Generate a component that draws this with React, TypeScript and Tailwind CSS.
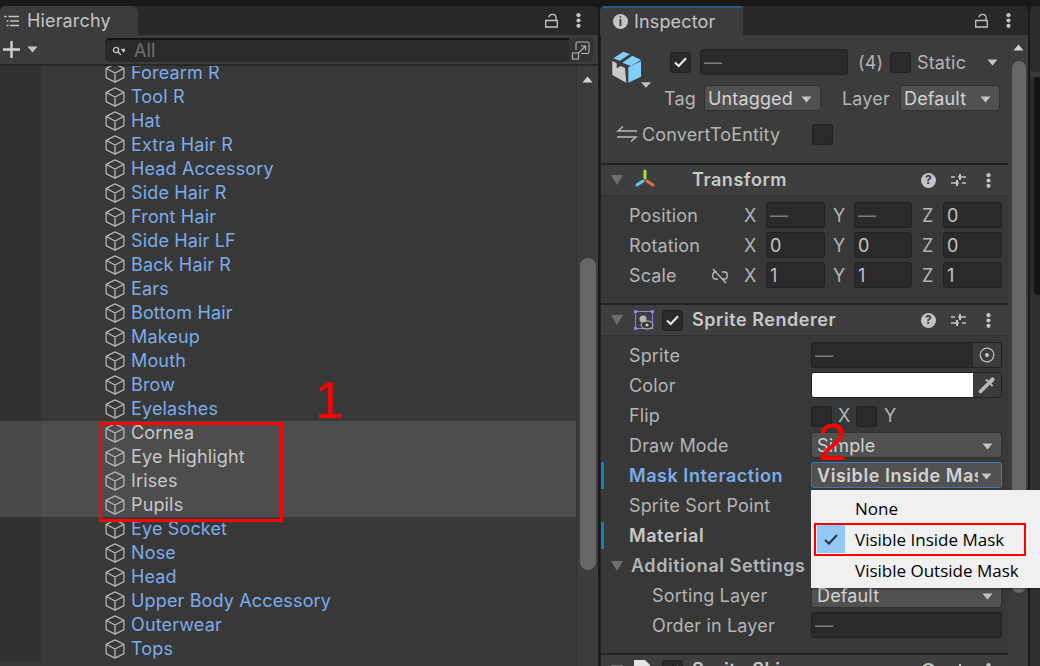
const hierarchyNames = [
  "Forearm R",
  "Tool R",
  "Hat",
  "Extra Hair R",
  "Head Accessory",
  "Side Hair R",
  "Front Hair",
  "Side Hair LF",
  "Back Hair R",
  "Ears",
  "Bottom Hair",
  "Makeup",
  "Mouth",
  "Brow",
  "Eyelashes",
  "Cornea",
  "Eye Highlight",
  "Irises",
  "Pupils",
  "Eye Socket",
  "Nose",
  "Head",
  "Upper Body Accessory",
  "Outerwear",
  "Tops",
];

const selectedNames = ["Cornea", "Eye Highlight", "Irises", "Pupils"];

const CubeIcon = () => (
  <svg width="20" height="20" viewBox="0 0 20 20" fill="none" stroke="#b5b5b5" strokeWidth="1.3" strokeLinejoin="round" className="shrink-0">
    <path d="M10 0.9 18.9 5.4V14.6L10 19.1 1.1 14.6V5.4Z" />
    <path d="M1.1 5.4 10 10 18.9 5.4M10 10V19.1" />
  </svg>
);

const Caret = ({ color = "#c4c4c4" }: { color?: string }) => (
  <svg width="11" height="7" viewBox="0 0 11 7" className="shrink-0">
    <path d="M0.5 0.5H10.5L5.5 6.5Z" fill={color} />
  </svg>
);

const FoldCaret = () => (
  <svg width="12" height="10" viewBox="0 0 12 10" className="shrink-0">
    <path d="M0 0H12L6 10Z" fill="#6f6f6f" />
  </svg>
);

const LockIcon = () => (
  <svg width="13" height="15" viewBox="0 0 13 15" fill="none" stroke="#c4c4c4" strokeWidth="1.3">
    <path d="M0.7 7.5H12.3V14H0.7Z" />
    <path d="M4 4.2C4 1.2 9.5 0 11 3.4V7.5" />
  </svg>
);

const DotsIcon = () => (
  <svg width="5" height="15" viewBox="0 0 5 15" fill="#c4c4c4">
    <circle cx="2.5" cy="2.2" r="2.1" />
    <circle cx="2.5" cy="7.5" r="2.1" />
    <circle cx="2.5" cy="12.8" r="2.1" />
  </svg>
);

const HelpIcon = () => (
  <div className="w-[15px] h-[15px] rounded-full bg-[#c4c4c4] text-[#383838] text-[12px] font-bold flex items-center justify-center leading-none">
    ?
  </div>
);

const PresetIcon = () => (
  <svg width="15" height="15" viewBox="0 0 15 15" stroke="#c4c4c4" strokeWidth="1.3" fill="#c4c4c4">
    <path d="M7 4H15M0 4H4M0 10H8M11 10H15" />
    <rect x="8" y="1" width="2" height="6" stroke="none" />
    <rect x="5" y="7" width="2" height="6" stroke="none" />
  </svg>
);

const CheckBox = ({ checked = false }: { checked?: boolean }) => (
  <div className="w-[21px] h-[21px] rounded-[3px] bg-[#2a2a2a] border border-[#212121] flex items-center justify-center shrink-0">
    {checked && (
      <svg width="13" height="11" viewBox="0 0 13 11" fill="none" stroke="#e4e4e4" strokeWidth="2.2">
        <path d="M1 5.5 4.7 9 12 1.2" />
      </svg>
    )}
  </div>
);

const TextField = ({ value, className = "" }: { value: string; className?: string }) => (
  <div
    className={
      "h-[26px] rounded-[3px] bg-[#2a2a2a] border border-[#212121] px-[3px] pt-[2px] flex items-center " +
      (value === "—" ? "text-[#7e7e7e] " : "text-[#c4c4c4] ") +
      className
    }
  >
    {value}
  </div>
);

const SelectField = ({ value, className = "" }: { value: string; className?: string }) => (
  <div className={"h-[26px] rounded-[3px] bg-[#515151] border border-[#303030] pr-[8px] pt-[2px] flex items-center justify-between text-[#d2d2d2] " + className}>
    <span>{value}</span>
    <Caret />
  </div>
);

const ComponentHeader = ({ title, icon }: { title: string; icon: React.ReactNode }) => (
  <div className="h-[30px] flex items-center pl-[10px] pr-[17px] bg-[#3e3e3e]">
    <FoldCaret />
    <div className="w-[58px] ml-[11px] flex items-center gap-[3px] shrink-0">{icon}</div>
    <span className="font-semibold tracking-[0.55px] text-[#c8c8c8]">{title}</span>
    <div className="ml-auto flex items-center">
      <HelpIcon />
      <div className="ml-[15px]">
        <PresetIcon />
      </div>
      <div className="ml-[20px]">
        <DotsIcon />
      </div>
    </div>
  </div>
);

const TransformRow = ({ label, values, link }: { label: string; values: string[]; link?: boolean }) => (
  <div className="h-[30px] pb-[2px] flex items-center pl-[28px]">
    <span className="w-[81px] mt-[2px] text-[#b4b4b4]">{label}</span>
    <span className="w-[34px] mt-[2px] pl-[1px]">
      {link && (
        <svg width="18" height="16" viewBox="0 0 18 16" fill="none" stroke="#bcbcbc" strokeWidth="1.3">
          <path d="M6 4H4C1 4 1 11 4 11H7M11 4H14C17 4 17 11 14 11H12M2 1 15 15" />
        </svg>
      )}
    </span>
    <div className="flex items-center text-[#b4b4b4]">
      <span className="w-[22px] mt-[2px]">X</span>
      <TextField value={values[0]} className="w-[59px]" />
      <span className="w-[29px] mt-[2px] pl-[8px]">Y</span>
      <TextField value={values[1]} className="w-[58px]" />
      <span className="w-[31px] mt-[2px] pl-[10px]">Z</span>
      <TextField value={values[2]} className="w-[59px]" />
    </div>
  </div>
);

const PropertyRow = ({
  label,
  children,
  marked,
  labelClass = "text-[#b4b4b4] pl-[28px]",
}: {
  label: string;
  children?: React.ReactNode;
  marked?: boolean;
  labelClass?: string;
}) => (
  <div className="h-[30px] pb-[2px] flex items-center relative">
    {marked && <div className="w-[3px] h-[27px] bg-[#0f80be] absolute left-0 top-[1px]" />}
    <span className={"w-[210px] mt-[2px] shrink-0 " + labelClass}>{label}</span>
    {children}
  </div>
);

const HierarchyPanel = () => (
  <div className="w-[598px] h-full flex flex-col rounded-t-[5px] overflow-hidden bg-[#282828]">
    <div className="h-[29px] flex items-center shrink-0">
      <div className="w-[138px] h-full bg-[#3c3c3c] rounded-tr-[6px] flex items-center pl-[4px] gap-[8px] text-[#c4c4c4]">
        <svg width="15" height="12" viewBox="0 0 15 12" stroke="#c4c4c4" strokeWidth="1.4">
          <path d="M4.5 1.5H15M6 6H15M6 10.5H15" />
          <path d="M0 1.5H2.5M2.5 6H4.5M2.5 10.5H4.5" />
        </svg>
        Hierarchy
      </div>
      <div className="ml-auto flex items-center gap-[18px] pr-[17px]">
        <LockIcon />
        <DotsIcon />
      </div>
    </div>
    <div className="h-[31px] bg-[#3c3c3c] border-b-[2px] border-[#282828] flex items-center shrink-0 relative">
      <svg width="19" height="19" viewBox="0 0 19 19" stroke="#d2d2d2" strokeWidth="2.4" className="ml-[2px]">
        <path d="M9.5 1V18M1 9.5H18" />
      </svg>
      <div className="ml-[6px]">
        <Caret />
      </div>
      <div className="ml-[67px] w-[488px] h-[24px] rounded-[5px] bg-[#2a2a2a] border-t-[2px] border-[#151515] flex items-center pl-[7px] gap-[9px] text-[#707070]">
        <svg width="13" height="10" viewBox="0 0 13 10" fill="none" stroke="#c4c4c4" strokeWidth="1.4">
          <circle cx="4" cy="4" r="2.6" />
          <path d="M6 6 9 9M10 3.5H13L11.5 5.5Z" />
        </svg>
        All
        <div className="ml-auto w-[24px] h-[24px] -mt-[2px] flex items-center justify-center bg-[#333333] rounded-r-[5px]">
          <svg width="20" height="20" viewBox="0 0 20 20" fill="none" stroke="#b4b4b4" strokeWidth="1.1">
            <path d="M5 10V3.5A1.5 1.5 0 0 1 6.5 2H16.5A1.5 1.5 0 0 1 18 3.5V12A1.5 1.5 0 0 1 16.5 13.5H10" />
            <rect x="1.5" y="13" width="6" height="6" />
            <path d="M7.5 13 14 6.5M10 6H14.5V10.5" />
          </svg>
        </div>
      </div>
    </div>
    <div className="flex-1 min-h-0 flex overflow-hidden">
      <div className="flex-1 min-w-0 bg-[#383838] overflow-hidden">
        <div className="-mt-[5px]">
          {hierarchyNames.map((name) => {
            const selected = selectedNames.includes(name);
            return (
              <div key={name} className={"h-[24px] flex items-center " + (selected ? "bg-[#4d4d4d]" : "")}>
                <div className={"w-[41px] h-full shrink-0 " + (selected ? "bg-[#484848]" : "bg-[#313131]")} />
                <div className="ml-[64px] flex items-center gap-[6px]">
                  <CubeIcon />
                  <span className={"whitespace-nowrap " + (selected ? "text-[#c8c8c8]" : "text-[#7bacea]")}>{name}</span>
                </div>
              </div>
            );
          })}
        </div>
      </div>
      <div className="w-[22px] shrink-0 bg-[#3c3c3c] border-l border-[#313131] flex flex-col items-center pt-[10px]">
        <svg width="11" height="7" viewBox="0 0 11 7">
          <path d="M0.5 6.5H10.5L5.5 0.5Z" fill="#d2d2d2" />
        </svg>
        <div className="w-[16px] h-[312px] mt-[175px] rounded-full bg-[#676767] shrink-0" />
      </div>
    </div>
  </div>
);

const InspectorPanel = () => (
  <div className="w-[428px] h-full ml-[2px] flex flex-col rounded-t-[5px] overflow-hidden bg-[#282828]">
    <div className="h-[29px] flex items-center shrink-0">
      <div className="w-[143px] h-full bg-[#3c3c3c] border-t-[2px] border-[#2c5d87] rounded-t-[3px] flex items-center pl-[13px] gap-[6px] text-[#c4c4c4]">
        <div className="w-[15px] h-[15px] rounded-full bg-[#c4c4c4] text-[#3c3c3c] text-[12px] font-bold flex items-center justify-center leading-none">
          i
        </div>
        Inspector
      </div>
      <div className="ml-auto flex items-center gap-[18px] pr-[17px]">
        <LockIcon />
        <DotsIcon />
      </div>
    </div>
    <div className="flex-1 min-h-0 flex overflow-hidden">
      <div className="flex-1 min-w-0 bg-[#383838] border-l border-[#232323]">
        <div className="h-[130px] bg-[#3c3c3c] border-b-[2px] border-[#232323] pt-[14px] relative">
          <div className="flex items-center h-[26px] ml-[69px]">
            <CheckBox checked />
            <TextField value="—" className="w-[148px] ml-[9px]" />
            <span className="ml-[10px] mt-[2px] w-[32px] text-[#b4b4b4]">(4)</span>
            <CheckBox />
            <span className="ml-[6px] mt-[2px] w-[70px] text-[#b4b4b4]">Static</span>
            <Caret />
          </div>
          <svg width="39" height="37" viewBox="0 0 39 37" className="absolute left-[11px] top-[16px]">
            <path d="M0.3 9.7 4.7 12.3V17.3L9 15 13 17.3 14.3 31.7 0.3 24Z" fill="#c9c9c9" />
            <path d="M16.3 16.3 29 10.3V25.7L16.3 31.7Z" fill="#7fd0fb" />
            <path d="M1.3 7.3 11.3 0.7 18 3 8 9.7ZM10.3 11.7 20.3 4.7 29 9 19 15Z" fill="#7fd0fb" />
            <path d="M29 31.3H39L34 36.7Z" fill="#c4c4c4" />
          </svg>
          <div className="flex items-center h-[26px] mt-[10px] ml-[63px]">
            <span className="w-[40px] mt-[2px] text-[#b4b4b4]">Tag</span>
            <SelectField value="Untagged" className="w-[117px] pl-[3px]" />
            <span className="ml-[21px] mt-[2px] w-[58px] text-[#b4b4b4]">Layer</span>
            <SelectField value="Default" className="w-[100px] pl-[3px]" />
          </div>
          <div className="flex items-center h-[26px] mt-[10px] ml-[15px]">
            <svg width="22" height="18" viewBox="0 0 22 18" fill="none" stroke="#b8b8b8" strokeWidth="1.5" className="shrink-0">
              <path d="M21 6H2L7 1.5M1 12H20L15 16.5" />
            </svg>
            <span className="ml-[4px] mt-[2px] w-[170px] text-[#b4b4b4]">ConvertToEntity</span>
            <CheckBox />
          </div>
        </div>
        <ComponentHeader
          title="Transform"
          icon={
            <svg width="22" height="22" viewBox="0 0 22 22" strokeWidth="3" strokeLinecap="round">
              <path d="M11 2V9" stroke="#a5df3c" />
              <path d="M9 12 3 16" stroke="#5ac8f5" />
              <path d="M13 12 19 16" stroke="#f0683a" />
            </svg>
          }
        />
        <div className="h-[110px] border-t border-[#303030] border-b-[2px] border-b-[#232323] pt-[5px]">
          <TransformRow label="Position" values={["—", "—", "0"]} />
          <TransformRow label="Rotation" values={["0", "0", "0"]} />
          <TransformRow label="Scale" values={["1", "1", "1"]} link />
        </div>
        <ComponentHeader
          title="Sprite Renderer"
          icon={
            <>
              <svg width="20" height="20" viewBox="0 0 20 20" fill="none" className="shrink-0">
                <rect x="1.5" y="1.5" width="17" height="17" stroke="#9b7fe8" strokeWidth="1" />
                <path d="M0 0H3V3H0ZM17 0H20V3H17ZM0 17H3V20H0Z" fill="#9b7fe8" />
                <circle cx="9" cy="9" r="3.5" fill="#b4b4b4" />
                <ellipse cx="13" cy="15" rx="6" ry="4" fill="#383838" stroke="#c4c4c4" />
                <circle cx="13" cy="15" r="1.6" fill="#c4c4c4" />
              </svg>
              <div className="ml-[5px]">
                <CheckBox checked />
              </div>
            </>
          }
        />
        <div className="border-t border-[#303030] pt-[5px]">
          <PropertyRow label="Sprite">
            <div className="w-[191px] h-[26px] rounded-[3px] bg-[#2a2a2a] border border-[#212121] flex items-center justify-between pl-[3px] text-[#7e7e7e]">
              <span className="mt-[2px]">—</span>
              <div className="w-[28px] h-full bg-[#3c3c3c] rounded-r-[3px] flex items-center justify-center">
                <svg width="16" height="16" viewBox="0 0 16 16" fill="none" stroke="#c4c4c4" strokeWidth="1.2">
                  <circle cx="8" cy="8" r="6.8" />
                  <circle cx="8" cy="8" r="2" fill="#c4c4c4" stroke="none" />
                </svg>
              </div>
            </div>
          </PropertyRow>
          <PropertyRow label="Color">
            <div className="w-[191px] h-[26px] rounded-[3px] bg-[#3c3c3c] border border-[#212121] flex items-stretch overflow-hidden">
              <div className="w-[161px] bg-white" />
              <div className="flex-1 flex items-center justify-center">
                <svg width="18" height="18" viewBox="0 0 18 18" fill="none" stroke="#b8b8b8" strokeLinecap="round">
                  <path d="M2.5 15.5 9.5 8.5" strokeWidth="3.6" />
                  <path d="M12 6 14.5 3.5" strokeWidth="4.2" />
                  <path d="M8.5 4 14 9.5" strokeWidth="2" />
                </svg>
              </div>
            </div>
          </PropertyRow>
          <PropertyRow label="Flip">
            <div className="mt-[2px] flex items-center">
              <CheckBox />
              <span className="ml-[6px] w-[18px] text-[#b4b4b4]">X</span>
              <CheckBox />
              <span className="ml-[7px] text-[#b4b4b4]">Y</span>
            </div>
          </PropertyRow>
          <PropertyRow label="Draw Mode">
            <SelectField value="Simple" className="w-[191px] pl-[5px]" />
          </PropertyRow>
          <PropertyRow label="Mask Interaction" marked labelClass="pl-[28px] text-[#7bacea] font-semibold tracking-[0.55px]">
            <div className="w-[191px] h-[26px] rounded-[3px] bg-[#515151] border border-[#3a79bb] pl-[5px] pt-[2px] flex items-center text-[#d2d2d2] font-semibold tracking-[0.55px]">
              <span className="w-[161px] overflow-hidden whitespace-nowrap">Visible Inside Mask</span>
              <div className="ml-[3px]">
                <Caret />
              </div>
            </div>
          </PropertyRow>
          <PropertyRow label="Sprite Sort Point" />
          <PropertyRow label="Material" marked labelClass="pl-[28px] text-[#c8c8c8] font-semibold tracking-[0.55px]" />
          <div className="h-[30px] flex items-center pl-[10px]">
            <FoldCaret />
            <span className="ml-[8px] font-semibold tracking-[0.55px] text-[#b4b4b4]">Additional Settings</span>
          </div>
          <PropertyRow label="Sorting Layer" labelClass="pl-[51px] text-[#b4b4b4]">
            <SelectField value="Default" className="w-[191px] pl-[5px]" />
          </PropertyRow>
          <PropertyRow label="Order in Layer" labelClass="pl-[51px] text-[#b4b4b4]">
            <TextField value="—" className="w-[191px]" />
          </PropertyRow>
        </div>
        <div className="h-[2px] mt-[12px] bg-[#232323]" />
        <ComponentHeader
          title="Sprite Skin"
          icon={
            <>
              <svg width="16" height="20" viewBox="0 0 16 20" className="shrink-0">
                <path d="M0 0H11L16 5V20H0Z" fill="#e4e4e4" />
                <path d="M6 7V15M10 7V15" stroke="#4aa64a" strokeWidth="2" />
              </svg>
              <div className="ml-[9px]">
                <CheckBox checked />
              </div>
            </>
          }
        />
      </div>
      <div className="w-[20px] shrink-0 bg-[#3c3c3c] border-l border-[#383838] flex flex-col items-center pt-[9px]">
        <svg width="11" height="7" viewBox="0 0 11 7" className="shrink-0">
          <path d="M0.5 6.5H10.5L5.5 0.5Z" fill="#d2d2d2" />
        </svg>
        <div className="w-[14px] h-[532px] mt-[10px] rounded-full bg-[#676767] shrink-0" />
      </div>
    </div>
  </div>
);

const MaskMenu = () => (
  <div className="absolute left-[811px] top-[490px] w-[229px] h-[98px] bg-[#f0f0f0] shadow-[1px_1px_2px_rgba(0,0,0,0.4)] pt-[3px] font-['Open_Sans','Noto_Sans',sans-serif] text-[17px] tracking-normal text-black">
    {["None", "Visible Inside Mask", "Visible Outside Mask"].map((item, i) => (
      <div key={item} className="h-[31px] flex items-center relative">
        {i === 1 && (
          <div className="absolute left-[6px] top-[1px] w-[28px] h-[28px] bg-[#90c8f6] flex items-center justify-center">
            <svg width="14" height="11" viewBox="0 0 14 11" fill="none" stroke="#303030" strokeWidth="2">
              <path d="M1 6 5 9.5 13 1" />
            </svg>
          </div>
        )}
        <span className="ml-[44px]">{item}</span>
      </div>
    ))}
  </div>
);

const Annotations = () => (
  <>
    <div className="absolute left-[99px] top-[422px] w-[184px] h-[100px] border-[3px] border-[#ff0000]" />
    <div className="absolute left-[814px] top-[523px] w-[212px] h-[33px] border-[2px] border-[#ff0000]" />
    <span className="absolute left-[315px] top-[372px] text-[52px] leading-[56px] text-[#ff0000] font-['Liberation_Sans',sans-serif]">
      1
    </span>
    <span className="absolute left-[818px] top-[414px] text-[52px] leading-[56px] text-[#ff0000] font-['Liberation_Sans',sans-serif]">
      2
    </span>
  </>
);

const App = () => {
  return (
    <div className="relative w-[1040px] h-[666px] overflow-hidden bg-[#191919] pt-[6px] flex font-['Inter',sans-serif] text-[18px] leading-[24px] tracking-[0.15px]">
      <HierarchyPanel />
      <InspectorPanel />
      <div className="flex-1 ml-[2px] flex flex-col bg-[#2c2c2c] rounded-tl-[5px]">
        <div className="h-[66px] shrink-0" />
        <div className="h-[5px] shrink-0 bg-[#3c3c3c]" />
        <div className="h-[218px] shrink-0 ml-[4px] bg-[#141414] rounded-l-[4px]" />
        <div className="flex-1 bg-[#303030]" />
      </div>
      <MaskMenu />
      <Annotations />
    </div>
  );
};

export default App;
